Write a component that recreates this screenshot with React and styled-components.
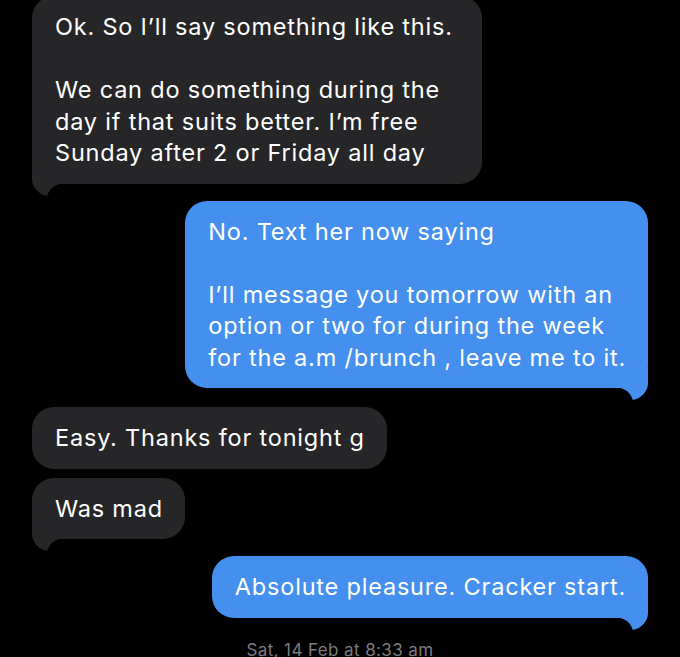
import React from "react";
import styled, { createGlobalStyle } from "styled-components";

const GlobalStyle = createGlobalStyle`
  html, body {
    margin: 0;
    padding: 0;
    background: #000;
    overflow: hidden;
  }
  body {
    font-family: Inter, "Helvetica Neue", Arial, sans-serif;
    -webkit-font-smoothing: antialiased;
  }
`;

const Thread = styled.div`
  display: flex;
  flex-direction: column;
  padding: 0 32px;
  margin-top: -4px;
`;

const Row = styled.div`
  display: flex;
  justify-content: ${(p) => (p.$mine ? "flex-end" : "flex-start")};
  margin-top: ${(p) => p.$gap}px;
`;

const Bubble = styled.div`
  position: relative;
  box-sizing: border-box;
  width: ${(p) => (p.$width ? `${p.$width}px` : "fit-content")};
  padding: 15px 22px 15px 23px;
  border-radius: 22px;
  background: ${(p) => (p.$mine ? "#4590ef" : "#262628")};
  color: #fff;
  font-size: 23.5px;
  line-height: 31.5px;
  letter-spacing: 0.8px;
  white-space: pre-line;
`;

const Tail = styled.svg`
  position: absolute;
  bottom: -13px;
  width: 34px;
  height: 33px;
  ${(p) => (p.$mine ? "right: 0; transform: scaleX(-1);" : "left: 0;")}
  fill: ${(p) => (p.$mine ? "#4590ef" : "#262628")};
`;

const Stamp = styled.div`
  margin-top: 22px;
  text-align: center;
  color: #7b7b80;
  font-size: 17px;
  letter-spacing: 0.4px;
`;

function Message({ mine, gap, width, tail, children }) {
  return (
    <Row $mine={mine} $gap={gap}>
      <Bubble $mine={mine} $width={width}>
        {children}
        {tail && (
          <Tail $mine={mine} viewBox="0 -20 34 33">
            <path d="M0 -20 V-5 C0 3 6 10 15 12 C17 8 18 2 30 -0.5 L30 -20 Z" />
          </Tail>
        )}
      </Bubble>
    </Row>
  );
}

export default function App() {
  return (
    <>
      <GlobalStyle />
      <Thread>
        <Message gap={0} width={450} tail>
          {"Ok. So I’ll say something like this.\n\nWe can do something during the\nday if that suits better. I’m free\nSunday after 2 or Friday all day"}
        </Message>
        <Message mine gap={17} tail>
          {"No. Text her now saying\n\nI’ll message you tomorrow with an\noption or two for during the week\nfor the a.m /brunch , leave me to it."}
        </Message>
        <Message gap={19}>Easy. Thanks for tonight g</Message>
        <Message gap={9} tail>Was mad</Message>
        <Message mine gap={17} tail>
          Absolute pleasure. Cracker start.
        </Message>
      </Thread>
      <Stamp>Sat, 14 Feb at 8:33 am</Stamp>
    </>
  );
}
